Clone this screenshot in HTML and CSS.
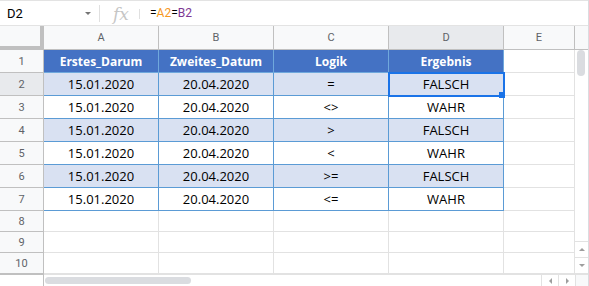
FILE: index.html
```html
<!DOCTYPE html>
<html lang="de">
<head>
    <meta charset="UTF-8">
    <title>Datumsvergleich</title>
    <link rel="stylesheet" href="styles.css">
</head>
<body>
    <div class="sheet">
        <!-- formula bar -->
        <div class="formula-bar">
            <div class="name-box">
                <span>D2</span>
                <span class="caret"></span>
            </div>
            <div class="fx">fx</div>
            <div class="formula">=<span class="ref-a">A2</span>=<span class="ref-b">B2</span></div>
        </div>

        <div class="grid">
            <div class="corner"></div>
            <div class="col-head">A</div>
            <div class="col-head">B</div>
            <div class="col-head">C</div>
            <div class="col-head active">D</div>
            <div class="col-head">E</div>
            <div class="scroll-head"></div>

            <div class="row-head">1</div>
            <div class="c th">Erstes_Darum</div>
            <div class="c th">Zweites_Datum</div>
            <div class="c th">Logik</div>
            <div class="c th">Ergebnis</div>
            <div class="c"></div>

            <div class="v-scroll">
                <div class="thumb"></div>
                <div class="arrows">
                    <div class="arrow"><span class="tri up"></span></div>
                    <div class="arrow"><span class="tri down"></span></div>
                </div>
            </div>

            <div class="row-head active">2</div>
            <div class="c td alt">15.01.2020</div>
            <div class="c td alt">20.04.2020</div>
            <div class="c td alt">=</div>
            <div class="c td alt sel">FALSCH<span class="handle"></span></div>
            <div class="c"></div>

            <div class="row-head">3</div>
            <div class="c td">15.01.2020</div>
            <div class="c td">20.04.2020</div>
            <div class="c td">&lt;&gt;</div>
            <div class="c td">WAHR</div>
            <div class="c"></div>

            <div class="row-head">4</div>
            <div class="c td alt">15.01.2020</div>
            <div class="c td alt">20.04.2020</div>
            <div class="c td alt">&gt;</div>
            <div class="c td alt">FALSCH</div>
            <div class="c"></div>

            <div class="row-head">5</div>
            <div class="c td">15.01.2020</div>
            <div class="c td">20.04.2020</div>
            <div class="c td">&lt;</div>
            <div class="c td">WAHR</div>
            <div class="c"></div>

            <div class="row-head">6</div>
            <div class="c td alt">15.01.2020</div>
            <div class="c td alt">20.04.2020</div>
            <div class="c td alt">&gt;=</div>
            <div class="c td alt">FALSCH</div>
            <div class="c"></div>

            <div class="row-head">7</div>
            <div class="c td">15.01.2020</div>
            <div class="c td">20.04.2020</div>
            <div class="c td">&lt;=</div>
            <div class="c td">WAHR</div>
            <div class="c"></div>

            <div class="row-head">8</div>
            <div class="c"></div>
            <div class="c"></div>
            <div class="c"></div>
            <div class="c"></div>
            <div class="c"></div>

            <div class="row-head">9</div>
            <div class="c"></div>
            <div class="c"></div>
            <div class="c"></div>
            <div class="c"></div>
            <div class="c"></div>

            <div class="row-head">10</div>
            <div class="c"></div>
            <div class="c"></div>
            <div class="c"></div>
            <div class="c"></div>
            <div class="c"></div>

            <!-- horizontal scrollbar -->
            <div class="h-blank"></div>
            <div class="h-scroll">
                <div class="h-thumb"></div>
                <div class="h-arrows">
                    <div class="arrow"><span class="tri left"></span></div>
                    <div class="arrow"><span class="tri right"></span></div>
                </div>
            </div>
            <div class="scroll-corner"></div>
        </div>
    </div>
</body>
</html>
```

FILE: styles.css
```css
body {
    margin: 0;
    background-color: #fff;
    font-family: "Open Sans", sans-serif;
}

.sheet {
    width: 588px;
    height: 286px;
    overflow: hidden;
    border-right: 1px solid #dadce0;
}

/* Formula bar */
.formula-bar {
    display: flex;
    align-items: center;
    height: 25px;
    border-top: 1px solid #e3e3e3;
    border-bottom: 1px solid #e3e3e3;
    box-sizing: border-box;
    height: 26px;
    font-family: Roboto, sans-serif;
}

.name-box {
    display: flex;
    align-items: center;
    justify-content: space-between;
    width: 100px;
    height: 17px;
    padding: 0 8px 0 7px;
    box-sizing: border-box;
    border-right: 1px solid #e0e0e0;
    font-size: 13px;
    color: #000;
}

.caret {
    width: 0;
    height: 0;
    border-left: 3px solid transparent;
    border-right: 3px solid transparent;
    border-top: 3px solid #757575;
}

.fx {
    width: 40px;
    height: 10px;
    margin-top: 1px;
    display: flex;
    align-items: center;
    justify-content: center;
    border-right: 1px solid #e0e0e0;
    font-family: "DejaVu Serif", serif;
    font-style: italic;
    font-size: 17px;
    color: #c6c6c6;
    box-sizing: border-box;
    padding-left: 3px;
}

.formula {
    padding-left: 10px;
    font-size: 12px;
    color: #000;
}

.ref-a {
    color: #f7981d;
}

.ref-b {
    color: #7e3794;
}

/* Grid */
.grid {
    display: grid;
    grid-template-columns: 44px 115px 115px 115px 115px 71px 13px;
    grid-template-rows: 24px repeat(7, 23px) repeat(3, 21px) 12px;
}

.corner {
    background-color: #f8f9fa;
    border-right: 4px solid #c0c0c0;
    border-bottom: 4px solid #c0c0c0;
}

.col-head {
    display: flex;
    align-items: center;
    justify-content: center;
    background-color: #f8f9fa;
    border-right: 1px solid #c0c0c0;
    border-bottom: 1px solid #c0c0c0;
    font-family: Roboto, sans-serif;
    font-size: 11px;
    color: #5f6368;
}

.col-head.active {
    background-color: #e8eaed;
}

.scroll-head {
    background-color: #f8f9fa;
    border-bottom: 1px solid #c0c0c0;
}

.row-head {
    display: flex;
    align-items: center;
    justify-content: center;
    background-color: #f8f9fa;
    border-right: 1px solid #c0c0c0;
    border-bottom: 1px solid #c0c0c0;
    font-family: Roboto, sans-serif;
    font-size: 11px;
    color: #5f6368;
}

.row-head.active {
    background-color: #e8eaed;
}

.c {
    display: flex;
    align-items: center;
    justify-content: center;
    border-right: 1px solid #e2e2e2;
    border-bottom: 1px solid #e2e2e2;
    font-size: 13px;
    color: #000;
}

.th {
    background-color: #4472c4;
    border-color: #6fa8dc;
    color: #fff;
    font-weight: bold;
    font-size: 12px;
}

.td {
    border-color: #5b9bd5;
}

.td.alt {
    background-color: #d9e1f2;
}

/* selected cell */
.sel {
    position: relative;
}

.sel::before {
    content: "";
    position: absolute;
    left: -1px;
    top: -1px;
    right: -2px;
    bottom: -2px;
    border: 2px solid #1a73e8;
    z-index: 2;
}

.handle {
    position: absolute;
    right: -2px;
    bottom: -3px;
    width: 6px;
    height: 6px;
    background-color: #1a73e8;
    z-index: 3;
}

/* Scrollbars */
.v-scroll {
    grid-column: 7;
    grid-row: 2 / span 10;
    display: flex;
    flex-direction: column;
    justify-content: space-between;
    border-bottom: 1px solid #e2e2e2;
}

.thumb {
    width: 8px;
    height: 26px;
    margin-left: 2px;
    border-radius: 4px;
    background-color: #dadce0;
}

.arrow {
    display: flex;
    align-items: center;
    justify-content: center;
    width: 13px;
    height: 15px;
    border-top: 1px solid #e2e2e2;
}

.tri {
    width: 0;
    height: 0;
}

.tri.up {
    border-left: 3px solid transparent;
    border-right: 3px solid transparent;
    border-bottom: 3px solid #9e9e9e;
}

.tri.down {
    border-left: 3px solid transparent;
    border-right: 3px solid transparent;
    border-top: 3px solid #9e9e9e;
}

.tri.left {
    border-top: 3px solid transparent;
    border-bottom: 3px solid transparent;
    border-right: 3px solid #9e9e9e;
}

.tri.right {
    border-top: 3px solid transparent;
    border-bottom: 3px solid transparent;
    border-left: 3px solid #9e9e9e;
}

.h-blank {
    border-right: 1px solid #c0c0c0;
    border-top: 1px solid #c0c0c0;
}

.h-scroll {
    grid-column: 2 / span 5;
    display: flex;
    justify-content: space-between;
    border-top: 1px solid #e2e2e2;
}

.h-thumb {
    width: 146px;
    height: 7px;
    margin: 2px 0 0 1px;
    border-radius: 4px;
    background-color: #dadce0;
}

.h-arrows {
    display: flex;
}

.h-arrows .arrow {
    width: 16px;
    height: 12px;
    border-top: none;
    border-left: 1px solid #e2e2e2;
}

.scroll-corner {
    background-color: #f8f9fa;
    border-top: 1px solid #e2e2e2;
    border-left: 1px solid #e2e2e2;
}
```
